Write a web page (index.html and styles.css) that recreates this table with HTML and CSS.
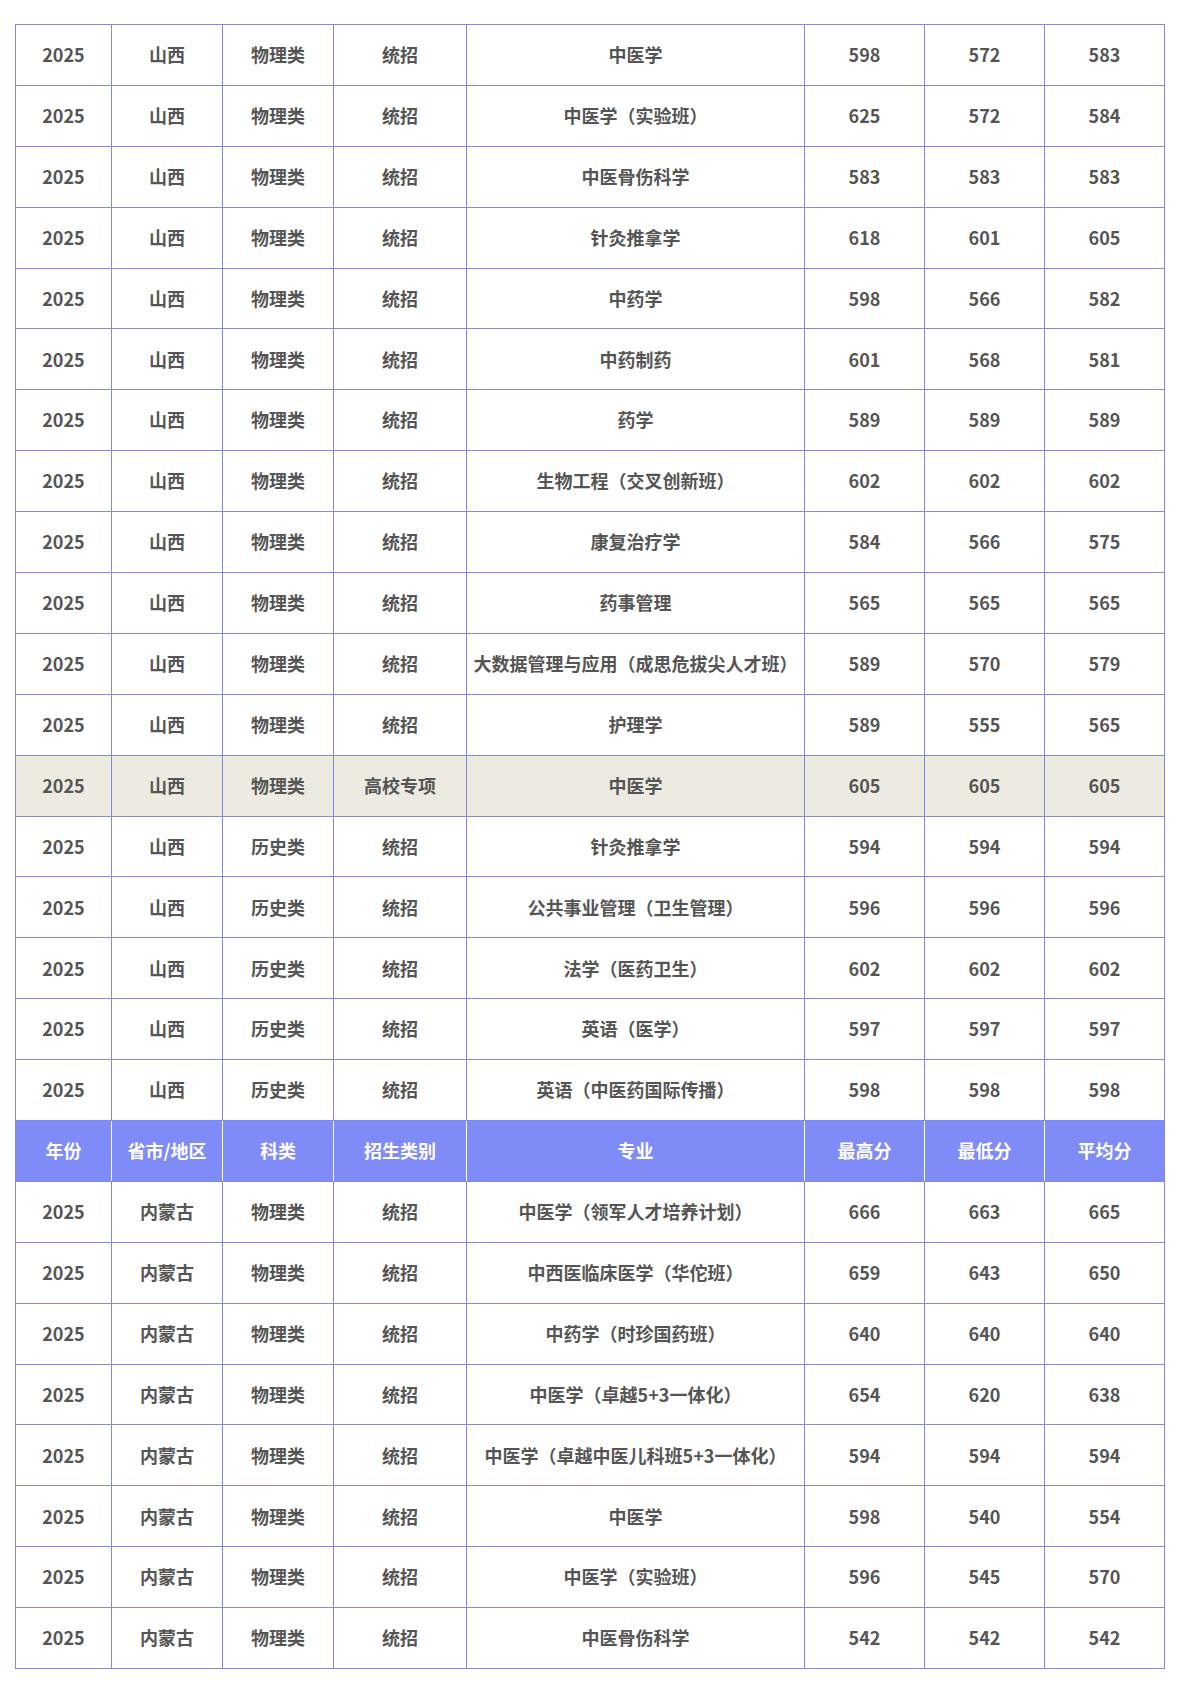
FILE: index.html
```html
<!DOCTYPE html>
<html lang="zh-CN">
<head>
<meta charset="utf-8">
<title>录取分数</title>
<link rel="stylesheet" href="styles.css">
</head>
<body>
<div class="page">
<table class="scores">
<colgroup>
<col class="c-year"><col class="c-prov"><col class="c-type"><col class="c-cat"><col class="c-major"><col class="c-num"><col class="c-num"><col class="c-num">
</colgroup>
<tbody>
<tr><td>2025</td><td>山西</td><td>物理类</td><td>统招</td><td>中医学</td><td>598</td><td>572</td><td>583</td></tr>
<tr><td>2025</td><td>山西</td><td>物理类</td><td>统招</td><td>中医学（实验班）</td><td>625</td><td>572</td><td>584</td></tr>
<tr><td>2025</td><td>山西</td><td>物理类</td><td>统招</td><td>中医骨伤科学</td><td>583</td><td>583</td><td>583</td></tr>
<tr><td>2025</td><td>山西</td><td>物理类</td><td>统招</td><td>针灸推拿学</td><td>618</td><td>601</td><td>605</td></tr>
<tr><td>2025</td><td>山西</td><td>物理类</td><td>统招</td><td>中药学</td><td>598</td><td>566</td><td>582</td></tr>
<tr><td>2025</td><td>山西</td><td>物理类</td><td>统招</td><td>中药制药</td><td>601</td><td>568</td><td>581</td></tr>
<tr><td>2025</td><td>山西</td><td>物理类</td><td>统招</td><td>药学</td><td>589</td><td>589</td><td>589</td></tr>
<tr><td>2025</td><td>山西</td><td>物理类</td><td>统招</td><td>生物工程（交叉创新班）</td><td>602</td><td>602</td><td>602</td></tr>
<tr><td>2025</td><td>山西</td><td>物理类</td><td>统招</td><td>康复治疗学</td><td>584</td><td>566</td><td>575</td></tr>
<tr><td>2025</td><td>山西</td><td>物理类</td><td>统招</td><td>药事管理</td><td>565</td><td>565</td><td>565</td></tr>
<tr><td>2025</td><td>山西</td><td>物理类</td><td>统招</td><td>大数据管理与应用（成思危拔尖人才班）</td><td>589</td><td>570</td><td>579</td></tr>
<tr><td>2025</td><td>山西</td><td>物理类</td><td>统招</td><td>护理学</td><td>589</td><td>555</td><td>565</td></tr>
<tr class="hl"><td>2025</td><td>山西</td><td>物理类</td><td>高校专项</td><td>中医学</td><td>605</td><td>605</td><td>605</td></tr>
<tr><td>2025</td><td>山西</td><td>历史类</td><td>统招</td><td>针灸推拿学</td><td>594</td><td>594</td><td>594</td></tr>
<tr><td>2025</td><td>山西</td><td>历史类</td><td>统招</td><td>公共事业管理（卫生管理）</td><td>596</td><td>596</td><td>596</td></tr>
<tr><td>2025</td><td>山西</td><td>历史类</td><td>统招</td><td>法学（医药卫生）</td><td>602</td><td>602</td><td>602</td></tr>
<tr><td>2025</td><td>山西</td><td>历史类</td><td>统招</td><td>英语（医学）</td><td>597</td><td>597</td><td>597</td></tr>
<tr><td>2025</td><td>山西</td><td>历史类</td><td>统招</td><td>英语（中医药国际传播）</td><td>598</td><td>598</td><td>598</td></tr>
<tr class="head"><td>年份</td><td>省市/地区</td><td>科类</td><td>招生类别</td><td>专业</td><td>最高分</td><td>最低分</td><td>平均分</td></tr>
<tr><td>2025</td><td>内蒙古</td><td>物理类</td><td>统招</td><td>中医学（领军人才培养计划）</td><td>666</td><td>663</td><td>665</td></tr>
<tr><td>2025</td><td>内蒙古</td><td>物理类</td><td>统招</td><td>中西医临床医学（华佗班）</td><td>659</td><td>643</td><td>650</td></tr>
<tr><td>2025</td><td>内蒙古</td><td>物理类</td><td>统招</td><td>中药学（时珍国药班）</td><td>640</td><td>640</td><td>640</td></tr>
<tr><td>2025</td><td>内蒙古</td><td>物理类</td><td>统招</td><td>中医学（卓越5+3一体化）</td><td>654</td><td>620</td><td>638</td></tr>
<tr><td>2025</td><td>内蒙古</td><td>物理类</td><td>统招</td><td>中医学（卓越中医儿科班5+3一体化）</td><td>594</td><td>594</td><td>594</td></tr>
<tr><td>2025</td><td>内蒙古</td><td>物理类</td><td>统招</td><td>中医学</td><td>598</td><td>540</td><td>554</td></tr>
<tr><td>2025</td><td>内蒙古</td><td>物理类</td><td>统招</td><td>中医学（实验班）</td><td>596</td><td>545</td><td>570</td></tr>
<tr><td>2025</td><td>内蒙古</td><td>物理类</td><td>统招</td><td>中医骨伤科学</td><td>542</td><td>542</td><td>542</td></tr>
</tbody>
</table>
</div>
</body>
</html>
```

FILE: styles.css
```css
html, body {
  margin: 0;
  padding: 0;
  background: #ffffff;
}

.page {
  padding: 24px 0 0 15px;
}

.scores {
  width: 1150px;
  border-collapse: collapse;
  table-layout: fixed;
  font-family: "Noto Sans CJK SC", "Noto Sans", sans-serif;
  font-size: 18px;
  font-weight: 700;
  color: #555555;
}

.c-year { width: 96px; }
.c-prov { width: 111px; }
.c-type { width: 111px; }
.c-cat { width: 133px; }
.c-major { width: 338px; }
.c-num { width: 120px; }

.scores td {
  border: 1px solid #8585e4;
  height: 59.9px;
  padding: 0;
  text-align: center;
  vertical-align: middle;
  line-height: 1.2;
  white-space: nowrap;
}

.scores tr.hl td {
  background: #edebe1;
}

.scores tr.head td {
  background: #7f8bf6;
  color: #ffffff;
  border-left-color: #ffffff;
  border-right-color: #ffffff;
}

.scores tr.head td:first-child {
  border-left-color: #8585e4;
}

.scores tr.head td:last-child {
  border-right-color: #8585e4;
}
```
